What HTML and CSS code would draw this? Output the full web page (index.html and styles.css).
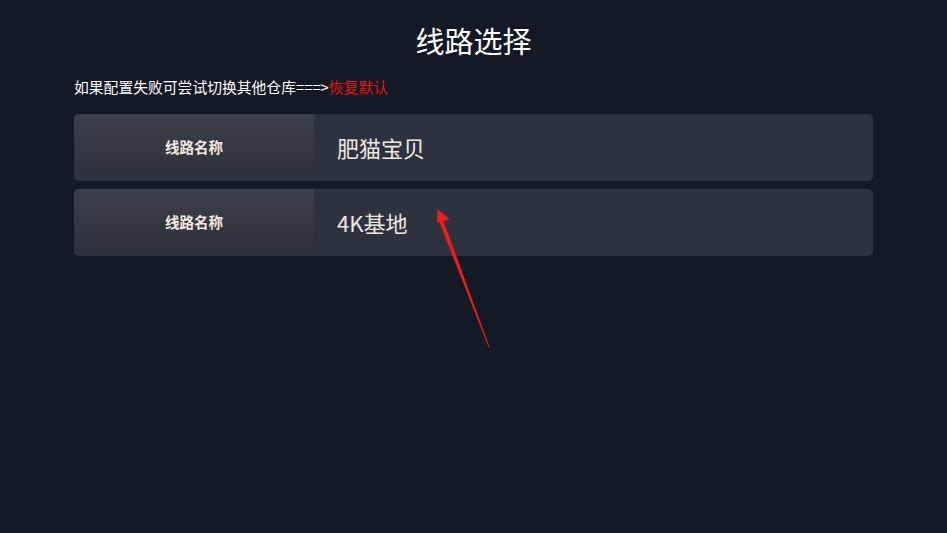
FILE: index.html
```html
<!DOCTYPE html>
<html lang="zh">
<head>
<meta charset="utf-8">
<link rel="stylesheet" href="styles.css">
</head>
<body>
<div class="page">
  <h1 class="title">线路选择</h1>
  <p class="hint">如果配置失败可尝试切换其他仓库===&gt;<span class="reset">恢复默认</span></p>
  <div class="list">
    <div class="row">
      <div class="label">线路名称</div>
      <div class="value">肥猫宝贝</div>
    </div>
    <div class="row">
      <div class="label">线路名称</div>
      <div class="value">4K基地</div>
    </div>
  </div>
  <svg class="arrow" width="947" height="533" viewBox="0 0 947 533">
    <polygon points="437.5,209 449.5,219 443.5,221 489.5,347 488.5,347 439.5,222.5 437,223" fill="#ee1c18"/>
  </svg>
</div>
</body>
</html>
```
FILE: styles.css
```css
html, body {
  margin: 0;
  padding: 0;
  background: #131a26;
}
.page {
  position: relative;
  width: 947px;
  height: 533px;
  padding: 20px 74px 0;
  box-sizing: border-box;
  font-family: "Noto Sans CJK SC", "Noto Sans", sans-serif;
}
.title {
  margin: 0;
  font-size: 29px;
  line-height: 40px;
  font-weight: 400;
  color: #ffffff;
  text-align: center;
}
.hint {
  margin: 17px 0 0;
  font-size: 14.8px;
  line-height: 20px;
  color: #ffffff;
}
.reset {
  color: #e3140f;
}
.list {
  margin-top: 17px;
  display: flex;
  flex-direction: column;
  gap: 8px;
}
.row {
  display: flex;
  height: 67px;
  border-radius: 5px;
  overflow: hidden;
  background: #2d333e;
}
.label {
  width: 240px;
  flex: none;
  display: flex;
  align-items: center;
  justify-content: center;
  padding-bottom: 3px;
  box-sizing: border-box;
  font-size: 14.5px;
  font-weight: 700;
  color: #f3e9df;
  background: linear-gradient(180deg, #3b4049 0%, #2b3039 100%);
}
.value {
  display: flex;
  align-items: center;
  padding-left: 23px;
  padding-bottom: 2px;
  font-size: 22px;
  color: #efe8e1;
}
.arrow {
  position: absolute;
  left: 0;
  top: 0;
  pointer-events: none;
}
```
